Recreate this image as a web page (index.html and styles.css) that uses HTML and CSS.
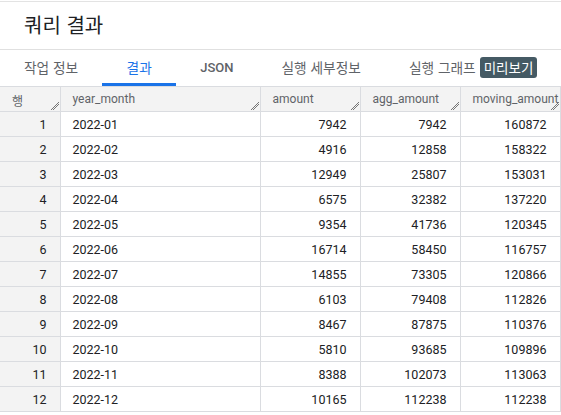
FILE: index.html
```html
<!DOCTYPE html>
<html lang="ko">
<head>
<meta charset="utf-8">
<link rel="stylesheet" href="styles.css">
</head>
<body>
<div class="panel">
  <div class="title">쿼리 결과</div>
  <div class="tabs">
    <div class="tab">작업 정보</div>
    <div class="tab active">결과</div>
    <div class="tab latin">JSON</div>
    <div class="tab">실행 세부정보</div>
    <div class="tab">실행 그래프 <span class="badge">미리보기</span></div>
  </div>
  <table class="grid">
    <colgroup>
      <col class="c-row"><col class="c-ym"><col class="c-num"><col class="c-num"><col class="c-num">
    </colgroup>
    <thead>
      <tr>
        <th>행<i class="grip"></i></th>
        <th>year_month<i class="grip"></i></th>
        <th>amount<i class="grip"></i></th>
        <th>agg_amount<i class="grip"></i></th>
        <th>moving_amount<i class="grip"></i></th>
      </tr>
    </thead>
    <tbody>
      <tr><td class="rn">1</td><td>2022-01</td><td class="n">7942</td><td class="n">7942</td><td class="n">160872</td></tr>
      <tr><td class="rn">2</td><td>2022-02</td><td class="n">4916</td><td class="n">12858</td><td class="n">158322</td></tr>
      <tr><td class="rn">3</td><td>2022-03</td><td class="n">12949</td><td class="n">25807</td><td class="n">153031</td></tr>
      <tr><td class="rn">4</td><td>2022-04</td><td class="n">6575</td><td class="n">32382</td><td class="n">137220</td></tr>
      <tr><td class="rn">5</td><td>2022-05</td><td class="n">9354</td><td class="n">41736</td><td class="n">120345</td></tr>
      <tr><td class="rn">6</td><td>2022-06</td><td class="n">16714</td><td class="n">58450</td><td class="n">116757</td></tr>
      <tr><td class="rn">7</td><td>2022-07</td><td class="n">14855</td><td class="n">73305</td><td class="n">120866</td></tr>
      <tr><td class="rn">8</td><td>2022-08</td><td class="n">6103</td><td class="n">79408</td><td class="n">112826</td></tr>
      <tr><td class="rn">9</td><td>2022-09</td><td class="n">8467</td><td class="n">87875</td><td class="n">110376</td></tr>
      <tr><td class="rn">10</td><td>2022-10</td><td class="n">5810</td><td class="n">93685</td><td class="n">109896</td></tr>
      <tr><td class="rn">11</td><td>2022-11</td><td class="n">8388</td><td class="n">102073</td><td class="n">113063</td></tr>
      <tr><td class="rn">12</td><td>2022-12</td><td class="n">10165</td><td class="n">112238</td><td class="n">112238</td></tr>
    </tbody>
  </table>
</div>
</body>
</html>
```
FILE: styles.css
```css
html, body {
  margin: 0;
  padding: 0;
  background: #fff;
}
body {
  font-family: Roboto, "Noto Sans CJK KR", sans-serif;
  color: #202124;
}
.panel {
  margin-top: 1px;
  border-top: 1px solid #e3e3e3;
  width: 561px;
}
.title {
  height: 48px;
  box-sizing: border-box;
  padding: 9px 0 0 24px;
  font-family: "Noto Sans CJK KR", Roboto, sans-serif;
  font-size: 20px;
  line-height: 28px;
  color: #202124;
  border-bottom: 1px solid #e0e0e0;
}
.tabs {
  display: flex;
  height: 36px;
  box-sizing: border-box;
}
.tab {
  padding: 1px 24px 0;
  font-family: "Noto Sans CJK KR", Roboto, sans-serif;
  font-size: 13.7px;
  font-weight: 400;
  color: #5f6368;
  display: flex;
  align-items: center;
  height: 36px;
  box-sizing: border-box;
  border-bottom: 3px solid transparent;
  white-space: nowrap;
}
.tab.latin {
  font-family: Roboto, sans-serif;
  font-size: 13px;
  font-weight: 500;
}
.tab.active {
  color: #1a73e8;
  border-bottom-color: #1a73e8;
  min-width: 74px;
  justify-content: center;
}
.badge {
  margin-left: 4px;
  background: #455a64;
  color: #fff;
  font-size: 13.5px;
  line-height: 21px;
  padding: 0 4px;
  border-radius: 3px;
}
.grid {
  border-collapse: collapse;
  table-layout: fixed;
  width: 560px;
  font-size: 12.5px;
}
.c-row { width: 60px; }
.c-ym { width: 200px; }
.c-num { width: 100px; }
.grid tr {
  height: 25px;
}
.grid th, .grid td {
  border: 1px solid #dadce0;
  padding: 0 12px;
  white-space: nowrap;
}
.grid th {
  background: #f3f3f3;
  font-size: 12px;
  font-weight: 400;
  color: #5f6368;
  text-align: left;
  position: relative;
  vertical-align: top;
  padding-top: 5px;
  padding-right: 0;
  overflow: visible;
}
.grid td {
  color: #202124;
}
.grid td.rn {
  background: #f3f3f3;
  text-align: right;
  padding-right: 13px;
}
.grid td.n {
  text-align: right;
  padding-right: 13px;
}
.grid tr td:first-child, .grid tr th:first-child {
  border-left: none;
}
.grip {
  position: absolute;
  right: 1px;
  bottom: 1px;
  width: 8px;
  height: 8px;
  background:
    linear-gradient(135deg, transparent 45%, #777 45%, #777 55%, transparent 55%) no-repeat 2px 2px / 6px 6px,
    linear-gradient(135deg, transparent 45%, #777 45%, #777 55%, transparent 55%) no-repeat 0 0 / 8px 8px;
}
```
